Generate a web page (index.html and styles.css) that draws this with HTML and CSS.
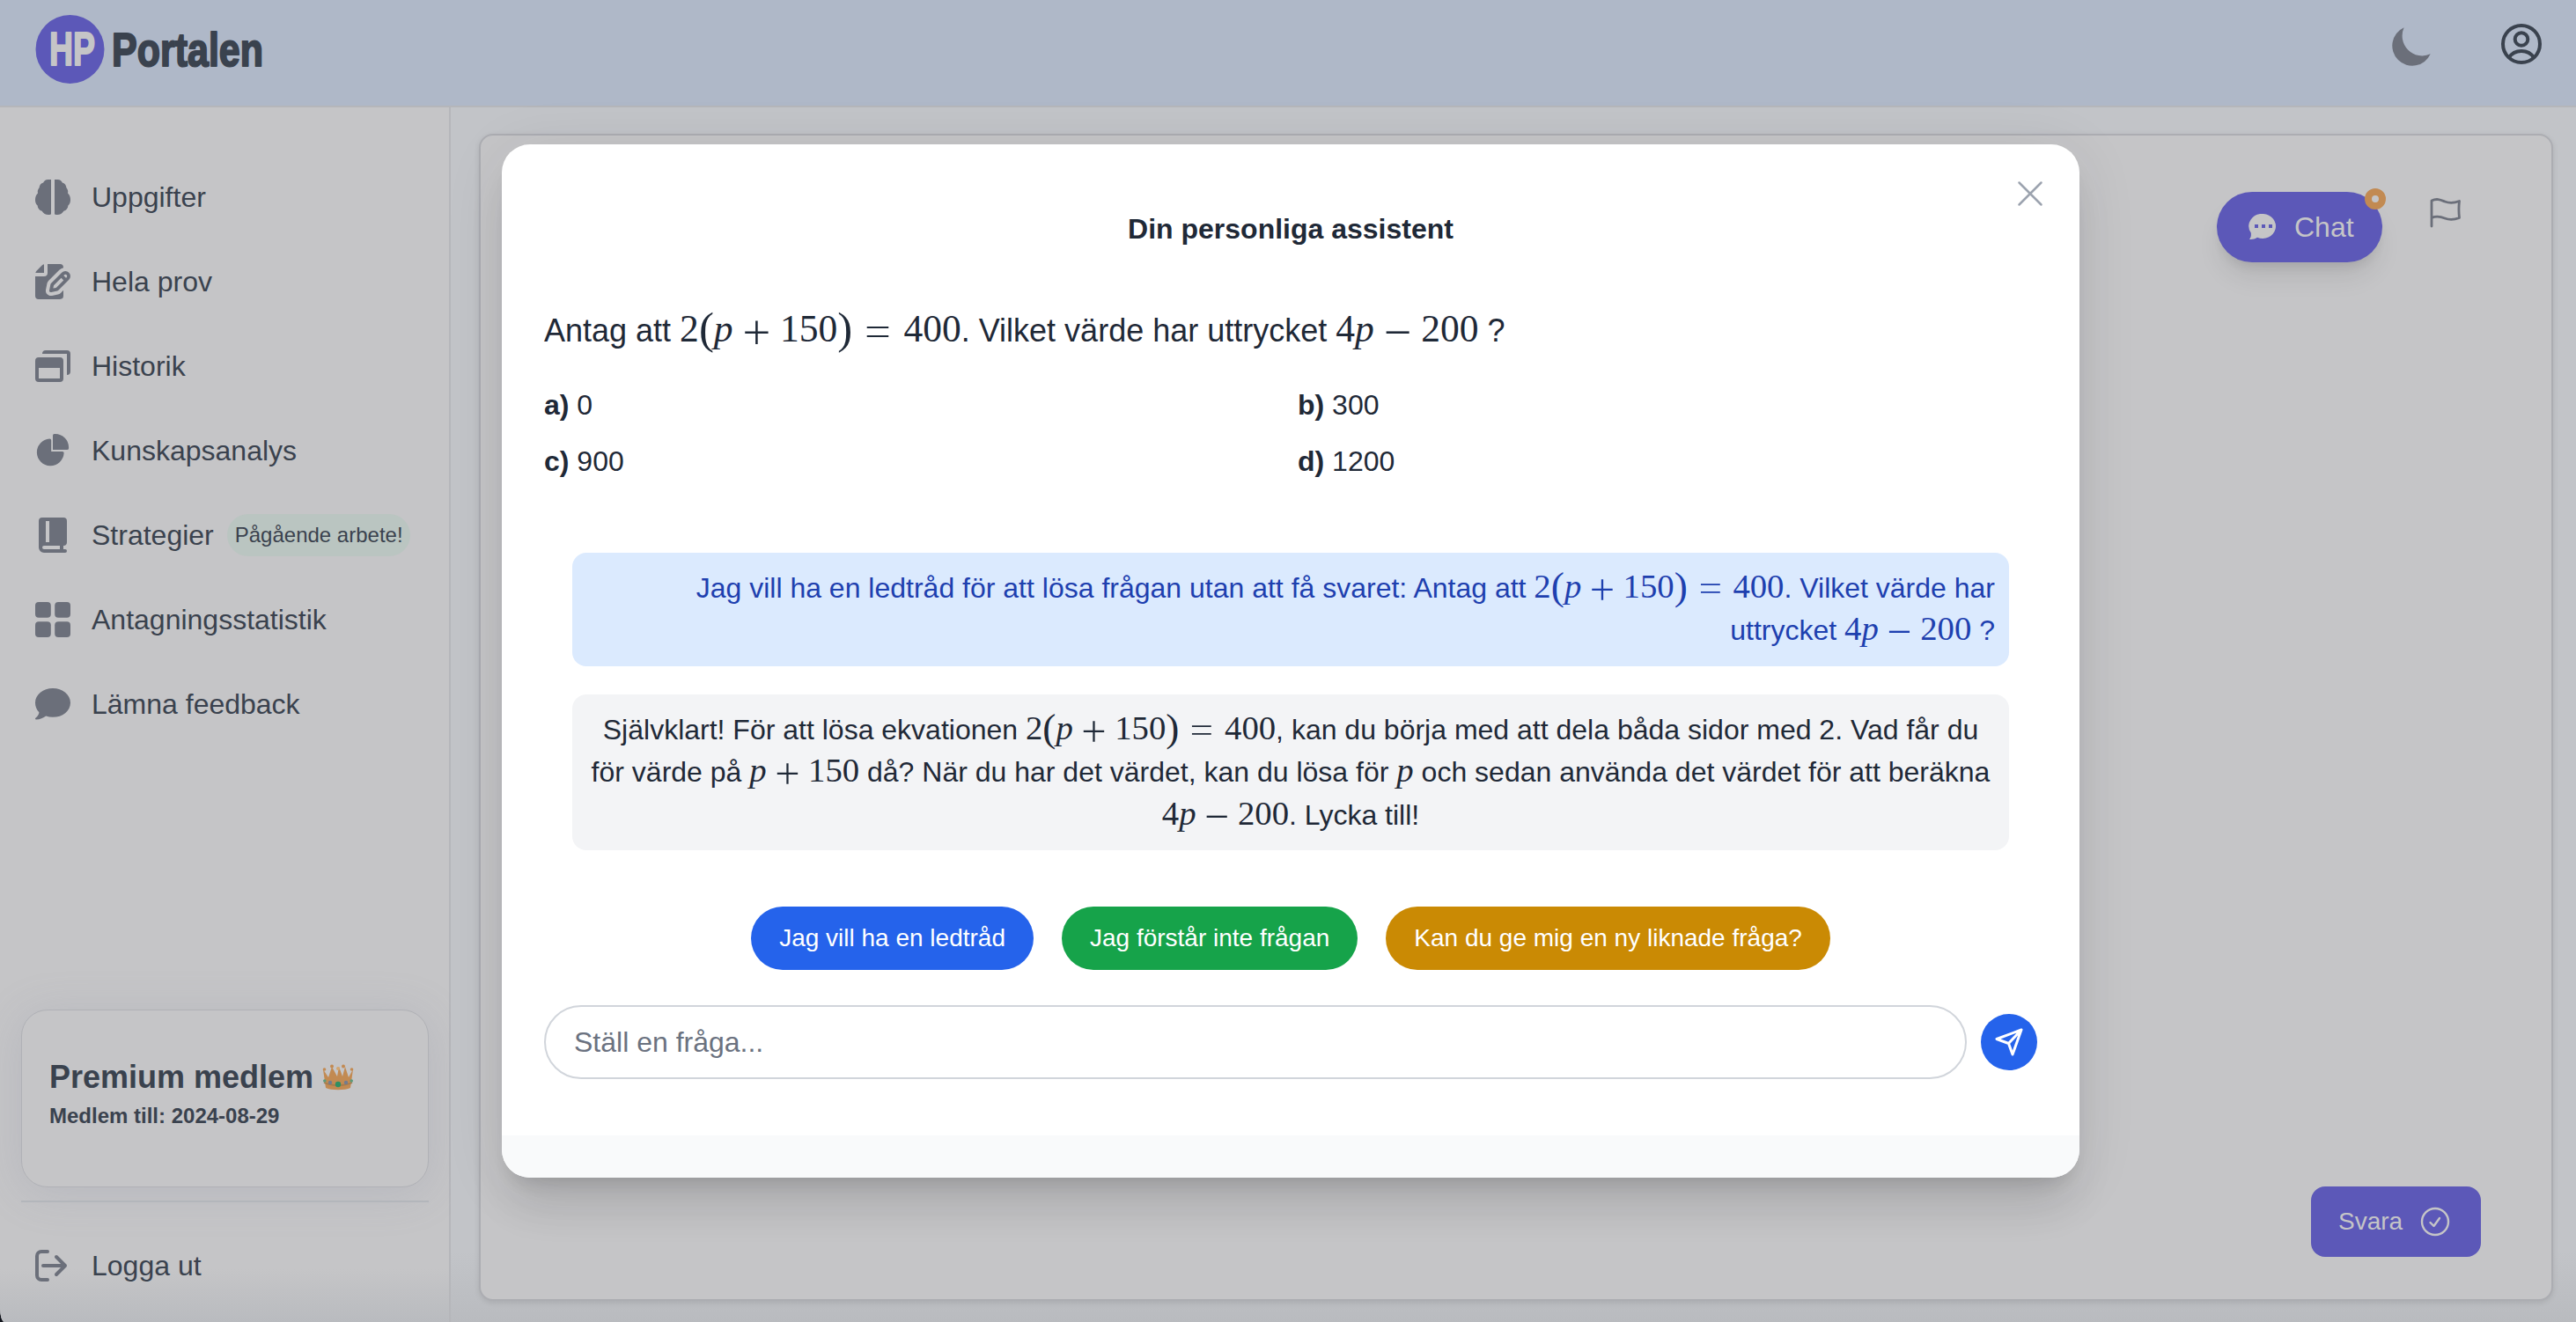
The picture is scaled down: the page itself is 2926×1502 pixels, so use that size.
FILE: index.html
```html
<!DOCTYPE html>
<html lang="sv">

<head>
    <meta charset="UTF-8">
    <meta name="viewport" content="width=device-width, initial-scale=1.0">
    <title>HP Portalen</title>
    <link rel="stylesheet" href="styles.css">
</head>

<body>
    <div class="page">
        <!-- Header -->
        <header class="topbar">
            <svg class="logo" width="290" height="84" viewBox="0 0 290 84">
                <circle cx="39.5" cy="40" r="39" fill="#5c58b8" />
                <text class="logo-text logo-hp" x="16" y="58" textLength="52" lengthAdjust="spacingAndGlyphs">HP</text>
                <text class="logo-text" x="87" y="59" textLength="172" lengthAdjust="spacingAndGlyphs">Portalen</text>
            </svg>
            <div class="topbar-icons">
                <svg class="moon" width="44" height="44" viewBox="1.900 2.600 15.500 15.500">
                    <path d="M17.293 13.293A8 8 0 0 1 6.707 2.707a8.001 8.001 0 1 0 10.586 10.586z" fill="#6b6f7a" />
                </svg>
                <svg class="user" width="48" height="48" viewBox="0 0 48 48" fill="none" stroke="#3a424e" stroke-width="4">
                    <circle cx="24" cy="24" r="21" />
                    <circle cx="24" cy="18.5" r="7.3" />
                    <path d="M10 39.500C13 34.500 18 32 24 32s11 2.500 14 7.500" />
                </svg>
            </div>
        </header>

        <div class="layout">
            <!-- Sidebar -->
            <aside class="sidebar">
                <nav class="menu">
                    <a href="#" class="menu-item">
                        <svg width="40" height="40" viewBox="0 0 20 20">
                            <path d="M9 0H7.300C5.800 0 5 .8 4.600 1.800 3.300 2.200 2.400 3.200 2.300 4.600 1.500 5.500 1.200 6.500 1.500 7.800 .5 8.800 0 10 0 11.500s.4 2.600 1.300 3.200C1.400 16.300 2.400 17.500 3.800 17.900 4.600 19.300 5.900 20 7.500 20 8.300 20 9 19.800 9 19.500Z" />
                            <path d="M11 0h1.700c1.500 0 2.300.8 2.700 1.800 1.300.4 2.200 1.400 2.300 2.800.8.900 1.100 1.900.8 3.200 1 1 1.500 2.200 1.500 3.700s-.4 2.600-1.300 3.200c-.1 1.600-1.100 2.800-2.500 3.200-.8 1.400-2.100 2.100-3.700 2.100-.8 0-1.500-.2-1.500-.5Z" />
                        </svg>
                        <span>Uppgifter</span>
                    </a>
                    <a href="#" class="menu-item">
                        <svg width="40" height="40" viewBox="0 0 20 20">
                            <path d="M5 5V.13a2.960 2.960 0 0 0-1.293.749L.879 3.707A2.980 2.980 0 0 0 .13 5H5Z" />
                            <path d="M6.737 11.061a2.961 2.961 0 0 1 .81-1.515l6.117-6.116A4.839 4.839 0 0 1 16 2.141V2a1.970 1.970 0 0 0-1.933-2H7v5a2 2 0 0 1-2 2H0v11a1.969 1.969 0 0 0 1.933 2h12.134A1.970 1.970 0 0 0 16 18v-3.093l-1.546 1.546c-.413.413-.94.695-1.513.81l-3.400.679a2.947 2.947 0 0 1-1.850-.227 2.960 2.960 0 0 1-1.635-3.257l.681-3.397Z" />
                            <path d="M8.961 16a.93.93 0 0 0 .189-.019l3.400-.679a.961.961 0 0 0 .49-.263l6.118-6.117a2.884 2.884 0 0 0-4.079-4.078l-6.117 6.117a.96.96 0 0 0-.263.491l-.679 3.400A.961.961 0 0 0 8.961 16Zm7.477-9.800a.958.958 0 0 1 .68-.281.961.961 0 0 1 .682 1.644l-.315.315-1.360-1.360.313-.318Zm-5.911 5.911 4.236-4.236 1.359 1.359-4.236 4.237-1.700.339.341-1.699Z" />
                        </svg>
                        <span>Hela prov</span>
                    </a>
                    <a href="#" class="menu-item">
                        <svg width="40" height="36" viewBox="0 0 20 18">
                            <path d="M4 2a2 2 0 0 1 2-2h12a2 2 0 0 1 2 2v10a2 2 0 0 1-2 2V2Z" />
                            <path fill-rule="evenodd" d="M2 4h12a2 2 0 0 1 2 2v10a2 2 0 0 1-2 2H2a2 2 0 0 1-2-2V6a2 2 0 0 1 2-2ZM2 10v6h12v-6Z" />
                        </svg>
                        <span>Historik</span>
                    </a>
                    <a href="#" class="menu-item">
                        <svg width="40" height="38" viewBox="0 0 22 21">
                            <path d="M16.975 11H10V4.025a1 1 0 0 0-1.066-.998 8.500 8.500 0 1 0 9.039 9.039.999.999 0 0 0-1-1.066h.002Z" />
                            <path d="M12.500 0c-.157 0-.311.01-.565.027A1 1 0 0 0 11 1.020V10h8.975a1 1 0 0 0 1-.935c.013-.188.028-.374.028-.565A8.510 8.510 0 0 0 12.500 0Z" />
                        </svg>
                        <span>Kunskapsanalys</span>
                    </a>
                    <a href="#" class="menu-item">
                        <svg width="40" height="40" viewBox="-2 0 20 20">
                            <path d="M16 14V2a2 2 0 0 0-2-2H2a2 2 0 0 0-2 2v15a3 3 0 0 0 3 3h12a1 1 0 0 0 0-2h-1v-2a2 2 0 0 0 2-2ZM4 2h2v12H4V2Zm8 16H3a1 1 0 0 1 0-2h9v2Z" />
                        </svg>
                        <span>Strategier</span>
                        <span class="badge">Pågående arbete!</span>
                    </a>
                    <a href="#" class="menu-item">
                        <svg width="40" height="40" viewBox="0 0 18 18">
                            <rect width="8" height="8" rx="1.800" />
                            <rect x="10" width="8" height="8" rx="1.800" />
                            <rect y="10" width="8" height="8" rx="1.800" />
                            <rect x="10" y="10" width="8" height="8" rx="1.800" />
                        </svg>
                        <span>Antagningsstatistik</span>
                    </a>
                    <a href="#" class="menu-item">
                        <svg width="40" height="36" viewBox="0 0 20 18">
                            <path d="M10 0c5.500 0 10 3.600 10 8.200s-4.500 8.200-10 8.200c-1.400 0-2.700-.2-3.900-.6C4.600 16.900 2.700 17.800.5 17.800c-.5 0-.7-.6-.3-.9 1.300-1 1.900-2.200 2-3.300C.8 12.100 0 10.300 0 8.200 0 3.600 4.500 0 10 0Z" />
                        </svg>
                        <span>Lämna feedback</span>
                    </a>
                </nav>

                <div class="member">
                    <div class="member-title">
                        <span>Premium medlem</span>
                        <svg width="36" height="30" viewBox="0 0 36 30">
                            <path d="M4 27 1 6l6 9 4-12 6 11 2-11 4 11 3-11 4 12 5-9-3 21c-6 3-22 3-28 0Z" fill="#c28a52" />
                            <circle cx="11" cy="2.500" r="2" fill="#c28a52" />
                            <circle cx="24" cy="2.500" r="2" fill="#c28a52" />
                            <circle cx="2.500" cy="6" r="1.800" fill="#c28a52" />
                            <circle cx="33.500" cy="6" r="1.800" fill="#c28a52" />
                            <circle cx="18" cy="5" r="2" fill="#d3a56d" />
                            <path d="M2 21c8 4 24 4 32 0" stroke="#a57b4d" stroke-width="1.500" fill="none" />
                            <circle cx="18" cy="23" r="3.200" fill="#2f8f62" />
                            <circle cx="9" cy="21" r="2.200" fill="#737c8f" />
                            <circle cx="27" cy="21" r="2.200" fill="#737c8f" />
                            <circle cx="2.800" cy="19" r="1.800" fill="#5b9a7a" />
                            <circle cx="33.200" cy="19" r="1.800" fill="#5b9a7a" />
                        </svg>
                    </div>
                    <div class="member-date">Medlem till: 2024-08-29</div>
                </div>
                <a href="#" class="logout">
                    <svg width="40" height="36" viewBox="0 0 40 36" fill="none" stroke="#6b6f7a" stroke-width="4" stroke-linecap="round" stroke-linejoin="round">
                        <path d="M14 2H7a5 5 0 0 0-5 5v22a5 5 0 0 0 5 5h7M9 18h25M24 8l10 10-10 10" />
                    </svg>
                    <span>Logga ut</span>
                </a>
            </aside>

            <!-- Innehåll -->
            <main class="content">
                <section class="task">
                    <div class="task-tools">
                        <button class="chat-btn">
                            <svg width="32" height="30" viewBox="0 0 32 30">
                                <path d="M17 0a15 14 0 1 1-7 26.800C7.500 28.400 4.500 29.300 1 29c1.600-2 2.200-4 1.800-7.500A15 14 0 0 1 17 0Z" fill="#c5c5c7" />
                                <path d="M7 12h4v4H7ZM15 12h4v4h-4ZM23 12h4v4h-4Z" fill="#5c58b8" />
                            </svg>
                            <span>Chat</span>
                            <span class="dot"></span>
                        </button>
                        <svg class="flag" width="36" height="34" viewBox="0 0 36 34" fill="none" stroke="#6b6f7a" stroke-width="2.800" stroke-linejoin="round" stroke-linecap="round">
                            <path d="M2 32V3c6-3 10-1 15 1s10 2 16.500-.5c-.8 6-.8 12 0 19C27 25 22 25 17 23S8 20 2 22.500" />
                        </svg>
                    </div>
                    <button class="answer-btn">
                        <span>Svara</span>
                        <svg width="34" height="34" viewBox="0 0 34 34" fill="none" stroke="#c5c5c7" stroke-width="2.400" stroke-linecap="round" stroke-linejoin="round">
                            <circle cx="17" cy="17" r="15" />
                            <path d="m11.500 18 4 4 6.500-9" />
                        </svg>
                    </button>
                </section>
            </main>
        </div>

        <!-- Assistenten -->
        <div class="modal">
            <div class="modal-body">
                <svg class="close" width="30" height="30" viewBox="0 0 30 30" stroke="#9ca3af" stroke-width="2.500" stroke-linecap="round">
                    <path d="M2.500 2.500l25 25M27.500 2.500l-25 25" />
                </svg>
                <h2 class="modal-title">Din personliga assistent</h2>

                <p class="question">Antag att <span class="math">2<span class="paren">(</span><i>p</i><span class="op">+</span>150<span class="paren">)</span><span class="rel">=</span>400</span>. Vilket värde har uttrycket <span class="math">4<i>p</i><span class="op">−</span>200</span> ?</p>
                <div class="options">
                    <div><b>a)</b> 0</div>
                    <div><b>b)</b> 300</div>
                    <div><b>c)</b> 900</div>
                    <div><b>d)</b> 1200</div>
                </div>

                <div class="messages">
                    <div class="message from-user">Jag vill ha en ledtråd för att lösa frågan utan att få svaret: Antag att <span class="math">2<span class="paren">(</span><i>p</i><span class="op">+</span>150<span class="paren">)</span><span class="rel">=</span>400</span>. Vilket värde har<br>uttrycket <span class="math">4<i>p</i><span class="op">−</span>200</span> ?</div>
                    <div class="message from-bot">Självklart! För att lösa ekvationen <span class="math">2<span class="paren">(</span><i>p</i><span class="op">+</span>150<span class="paren">)</span><span class="rel">=</span>400</span>, kan du börja med att dela båda sidor med 2. Vad får du<br>för värde på <span class="math"><i>p</i><span class="op">+</span>150</span> då? När du har det värdet, kan du lösa för <span class="math"><i>p</i></span> och sedan använda det värdet för att beräkna<br><span class="math">4<i>p</i><span class="op">−</span>200</span>. Lycka till!</div>
                </div>

                <div class="suggestions">
                    <button class="pill blue">Jag vill ha en ledtråd</button>
                    <button class="pill green">Jag förstår inte frågan</button>
                    <button class="pill yellow">Kan du ge mig en ny liknade fråga?</button>
                </div>

                <div class="ask">
                    <input type="text" placeholder="Ställ en fråga...">
                    <button class="send">
                        <svg width="32" height="32" viewBox="0 0 32 32" fill="none" stroke="#fff" stroke-width="3" stroke-linejoin="round">
                            <path d="M30 2 2 12.500l13.500 5L20 30ZM15.500 17.500 30 2" />
                        </svg>
                    </button>
                </div>
            </div>
            <div class="modal-footer"></div>
        </div>
    </div>
</body>

</html>
```
FILE: styles.css
```css
* {
    box-sizing: border-box;
}

body {
    margin: 0;
    background-color: #10141c;
    font-family: "Liberation Sans", Arial, sans-serif;
    font-size: 32px;
    color: #1f2937;
}

button {
    border: none;
    font-family: inherit;
    cursor: pointer;
}

.page {
    position: relative;
    display: flex;
    flex-direction: column;
    height: 1502px;
    background-color: #c5c5c7;
    border-bottom-left-radius: 5px 16px;
    overflow: hidden;
}

/* Header */
.topbar {
    display: flex;
    justify-content: space-between;
    align-items: flex-start;
    height: 122px;
    padding: 16px 38px 0 40px;
    background-color: #afb8c8;
    border-bottom: 2px solid #b5b6ba;
}

.logo {
    overflow: visible;
}

.logo-text {
    font-size: 53px;
    font-weight: bold;
    fill: #3a424e;
    stroke: #3a424e;
    stroke-width: 2;
    stroke-linejoin: round;
}

.logo-hp {
    fill: #c5c5c7;
    stroke: #c5c5c7;
}

.topbar-icons {
    display: flex;
    gap: 79px;
    padding-top: 10px;
}

.moon {
    margin-top: 5px;
}

/* Sidebar */
.layout {
    display: flex;
    flex: 1;
}

.sidebar {
    display: flex;
    flex-direction: column;
    width: 512px;
    padding: 54px 23px 0 24px;
    border-right: 2px solid #b5b6ba;
    background: linear-gradient(#c5c5c7 1320px, #b9bbbf);
}

.menu-item,
.logout {
    display: flex;
    align-items: center;
    gap: 24px;
    height: 96px;
    padding-left: 16px;
    color: #3a424e;
    text-decoration: none;
    white-space: nowrap;
}

.menu-item svg {
    fill: #6b6f7a;
}

.badge {
    margin-left: -9px;
    padding: 0 8px 0 9px;
    height: 48px;
    line-height: 47px;
    border-radius: 24px;
    background-color: #bac5c1;
    font-size: 24px;
}

.member {
    height: 202px;
    margin-top: auto;
    padding: 53px 31px 0;
    border: 1px solid #b0b1b6;
    border-radius: 30px;
    background-color: #c5c5c7;
    box-shadow: 0 6px 50px rgba(130, 138, 160, 0.22);
    color: #3a424e;
    font-weight: bold;
}

.member-title {
    display: flex;
    align-items: center;
    gap: 10px;
    height: 46px;
    font-size: 36px;
}

.member-date {
    font-size: 24px;
    line-height: 42px;
}

.logout {
    height: 138px;
    margin-top: 15px;
    padding-top: 8px;
    border-top: 2px solid #b3b6bb;
}

/* Frågekort */
.content {
    flex: 1;
    padding: 30px 26px 24px 32px;
    background: linear-gradient(#c2c4c8 1300px, #b9bbbf);
}

.task {
    display: flex;
    flex-direction: column;
    justify-content: space-between;
    align-items: flex-end;
    height: 1326px;
    padding: 64px 80px 48px;
    border: 2px solid #acadb2;
    border-radius: 16px;
    background-color: #c5c5c7;
    box-shadow: 0 2px 6px rgba(0, 0, 0, 0.1);
}

.task-tools {
    display: flex;
    gap: 54px;
    padding-right: 22px;
}

.chat-btn {
    position: relative;
    display: flex;
    align-items: center;
    gap: 20px;
    width: 188px;
    height: 80px;
    padding: 0 0 0 36px;
    border-radius: 40px;
    background-color: #5c58b8;
    box-shadow: 0 20px 30px -6px rgba(0, 0, 0, 0.1), 0 8px 12px -4px rgba(0, 0, 0, 0.08);
    color: #c5c5c7;
    font-size: 32px;
}

.dot {
    position: absolute;
    top: -4px;
    right: -4px;
    width: 24px;
    height: 24px;
    border: 8px solid #c28a52;
    border-radius: 50%;
    background-color: #c5c5c7;
}

.flag {
    margin-top: 7px;
}

.answer-btn {
    display: flex;
    align-items: center;
    gap: 20px;
    width: 193px;
    height: 80px;
    padding: 0 0 0 31px;
    border-radius: 16px;
    background-color: #5c58b8;
    color: #c5c5c7;
    font-size: 28px;
}

/* Modal */
.modal {
    position: absolute;
    top: 164px;
    left: 570px;
    width: 1792px;
    border-radius: 32px;
    background-color: #fff;
    box-shadow: 0 40px 50px -10px rgba(0, 0, 0, 0.1), 0 16px 20px -12px rgba(0, 0, 0, 0.12), 0 10px 70px rgba(40, 45, 60, 0.09);
    overflow: hidden;
}

.modal-body {
    position: relative;
    height: 1126px;
    padding: 72px 48px 0;
}

.modal-footer {
    height: 48px;
    background-color: #f9fafb;
}

.close {
    position: absolute;
    top: 41px;
    right: 41px;
}

.modal-title {
    margin: 0;
    font-size: 32px;
    line-height: 48px;
    text-align: center;
}

.question {
    margin: 64px 0 0;
    font-size: 36px;
    line-height: 56px;
}

/* Formler */
.math {
    font-family: "Liberation Serif", serif;
    font-size: 1.21em;
    line-height: 0;
    white-space: nowrap;
}

.math i {
    display: inline-block;
    width: 0.503em;
    line-height: 0;
}

.paren {
    display: inline-block;
    width: 0.333em;
    font-size: 1.17em;
    line-height: 0;
    text-align: center;
    vertical-align: -0.04em;
}

.op,
.rel {
    display: inline-block;
    width: 0.873em;
    font-family: Inter, sans-serif;
    font-weight: 200;
    font-size: 1.4em;
    line-height: 0;
    text-align: center;
    vertical-align: -0.11em;
}

.rel {
    width: 0.953em;
    transform: scale(1.08, 0.8);
}

.options {
    display: grid;
    grid-template-columns: 1fr 1fr;
    gap: 16px;
    margin-top: 32px;
    line-height: 48px;
}

.messages {
    display: flex;
    flex-direction: column;
    gap: 32px;
    margin-top: 80px;
    padding: 0 32px;
}

.message {
    padding: 16px;
    border-radius: 16px;
    line-height: 48.4px;
    white-space: nowrap;
}

.from-user {
    background-color: #dbeafe;
    color: #1e40af;
    text-align: right;
}

.from-bot {
    background-color: #f3f4f6;
    text-align: center;
}

.suggestions {
    display: flex;
    justify-content: center;
    gap: 32px;
    margin-top: 64px;
}

.pill {
    height: 72px;
    padding: 0 32px;
    border-radius: 36px;
    color: #fff;
    font-size: 28px;
}

.blue {
    background-color: #2563eb;
}

.green {
    background-color: #16a34a;
}

.yellow {
    background-color: #ca8a04;
}

.ask {
    display: flex;
    align-items: center;
    gap: 16px;
    margin-top: 40px;
}

.ask input {
    flex: 1;
    height: 84px;
    padding: 0 32px;
    border: 2px solid #d1d5db;
    border-radius: 42px;
    font-family: inherit;
    font-size: 32px;
}

.ask input::placeholder {
    color: #6b7280;
}

.send {
    display: flex;
    align-items: center;
    justify-content: center;
    width: 64px;
    height: 64px;
    padding: 0;
    border-radius: 50%;
    background-color: #2563eb;
}
```
